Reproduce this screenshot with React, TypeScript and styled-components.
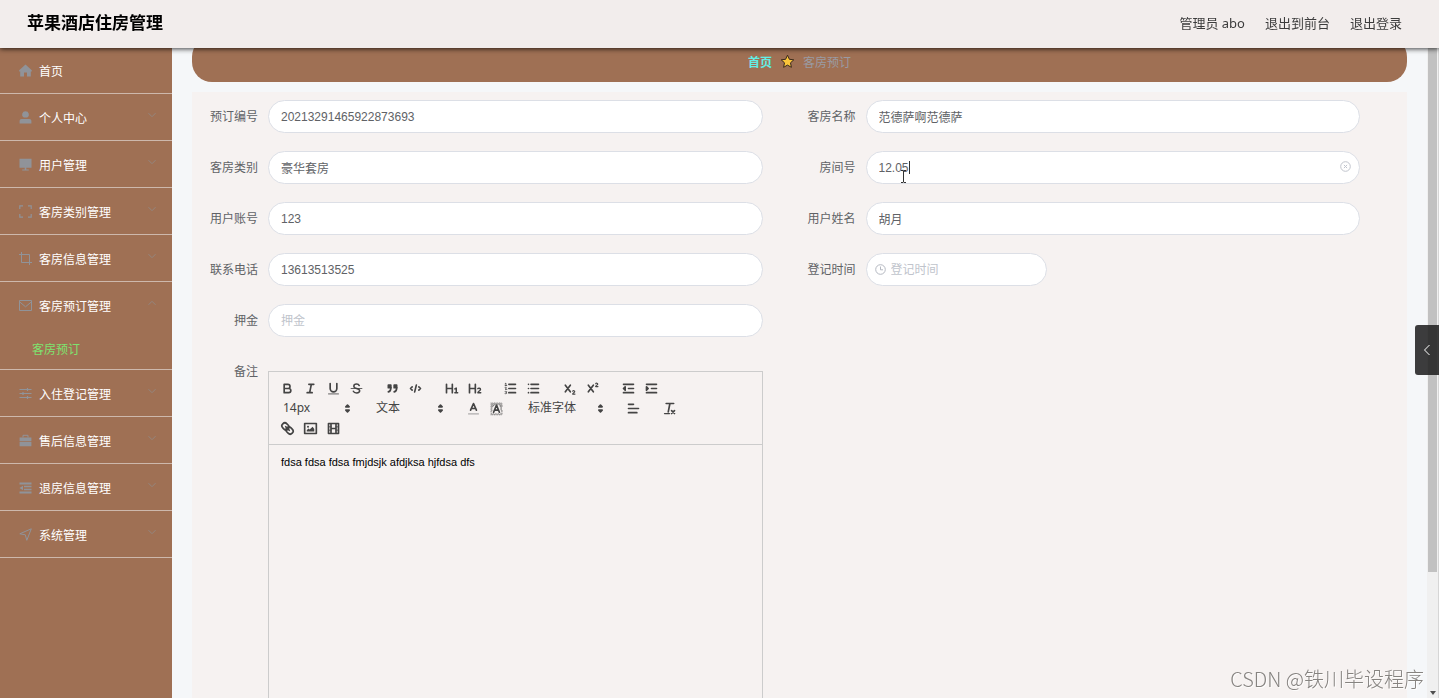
import React from 'react';
import styled, { createGlobalStyle } from 'styled-components';

const GlobalStyle = createGlobalStyle`
  * { box-sizing: border-box; }
  body {
    margin: 0;
    background: #f5f7f9;
    color: #606266;
    font-family: "Liberation Sans", "Noto Sans CJK SC", sans-serif;
    font-size: 12px;
  }
  button, input, select, textarea { font: inherit; color: inherit; }
`;

const uiFont = '"Noto Sans", "Noto Sans CJK SC", sans-serif';

/* ---------- page frame ---------- */

const Shell = styled.div`
  display: flex;
  height: 100vh;
  overflow: hidden;
`;

const Header = styled.header`
  position: fixed;
  inset: 0 0 auto 0;
  z-index: 5;
  display: flex;
  align-items: center;
  justify-content: space-between;
  height: 48px;
  padding: 0 37px 2px 27px;
  background: #f2edec;
  box-shadow: 0 1px 5px rgba(0, 0, 0, 0.75);
  font-family: ${uiFont};
`;

const Brand = styled.h1`
  margin: 0;
  color: #000;
  font-size: 17px;
  line-height: 24px;
  font-weight: 700;
`;

const Account = styled.nav`
  display: flex;
  gap: 20px;
  color: #3c3c3c;
  font-size: 13px;
  line-height: 20px;
`;

const AccountLink = styled.a`
  color: inherit;
  text-decoration: none;
`;

/* ---------- sidebar ---------- */

const Sidebar = styled.nav`
  flex: 0 0 172px;
  padding-top: 47px;
  background: #9f7054;
`;

const MenuList = styled.ul`
  margin: 0;
  padding: 0;
  list-style: none;
`;

const MenuItem = styled.li`
  border-bottom: 1px solid #cdb8ac;
`;

const MenuButton = styled.button`
  display: flex;
  align-items: center;
  gap: 7px;
  width: 100%;
  height: 46px;
  padding: 0 16px 0 19px;
  border: 0;
  background: none;
  color: #fff;
  text-align: left;
  cursor: pointer;
`;

const MenuText = styled.span`
  flex: 1;
`;

const MenuIcon = styled.svg`
  width: 13px;
  height: 13px;
  fill: none;
  stroke: #909399;
  stroke-width: 1;
`;

const Chevron = styled.svg<{ $up?: boolean }>`
  width: 8px;
  height: 8px;
  margin-bottom: 4px;
  fill: none;
  stroke: #94867f;
  stroke-width: 1;
  transform: ${(p) => (p.$up ? 'rotate(180deg)' : 'none')};
`;

const SubLink = styled.a`
  display: block;
  padding: 3px 0 0 32px;
  color: #7de36f;
  line-height: 38px;
  text-decoration: none;
`;

/* ---------- content ---------- */

const Content = styled.main`
  flex: 1;
  min-width: 0;
  padding: 37px 20px 0;
`;

const Breadcrumb = styled.nav`
  display: flex;
  align-items: center;
  justify-content: center;
  gap: 8px;
  height: 45px;
  padding-top: 4px;
  border-radius: 20px;
  background: #9f7054;
`;

const Crumb = styled.a<{ $home?: boolean }>`
  color: ${(p) => (p.$home ? '#62eee6' : '#9a9ba3')};
  font-weight: ${(p) => (p.$home ? 700 : 400)};
  text-decoration: none;
`;

const Panel = styled.form`
  display: grid;
  grid-template-columns: 1fr 1fr;
  row-gap: 18px;
  margin-top: 10px;
  padding: 8px 10px 40px;
  background: #f6f2f1;
`;

const Field = styled.div<{ $start?: boolean }>`
  display: flex;
  padding-right: 37px;
  ${(p) => (p.$start ? 'grid-column-start: 1;' : '')}
`;

const Label = styled.label`
  flex: 0 0 66px;
  padding: 2px 10px 0 0;
  line-height: 31px;
  text-align: right;
`;

const Control = styled.div<{ $short?: boolean }>`
  position: relative;
  flex: ${(p) => (p.$short ? '0 0 181px' : '1')};
`;

const TextInput = styled.input<{ $icon?: boolean }>`
  display: block;
  width: 100%;
  height: 33px;
  padding: 0 30px 0 ${(p) => (p.$icon ? '24px' : '12px')};
  border: 1px solid #dcdfe6;
  border-radius: 17px;
  outline: 0;
  background: #fff;
  &::placeholder { color: #c0c4cc; opacity: 1; }
`;

const ClockIcon = styled.svg`
  position: absolute;
  left: 9px;
  top: 11px;
  width: 11px;
  height: 11px;
  fill: none;
  stroke: #b4b8c1;
`;

const ClearButton = styled.button`
  position: absolute;
  right: 9px;
  top: 10px;
  display: flex;
  padding: 0;
  border: 0;
  background: none;
`;

const Caret = styled.span`
  position: absolute;
  left: 43px;
  top: 10px;
  width: 1px;
  height: 13px;
  background: #333;
`;

const Pointer = styled.svg`
  position: absolute;
  left: 34px;
  top: 19px;
  width: 7px;
  height: 13px;
  fill: none;
  stroke: #333;
`;

/* ---------- rich text editor ---------- */

const Editor = styled.div`
  flex: 1;
  margin-top: 16px;
  border: 1px solid #ccc;
`;

const Toolbar = styled.div`
  display: flex;
  flex-wrap: wrap;
  padding: 6px 7px;
  border-bottom: 1px solid #ccc;
  color: #444;
  font-family: ${uiFont};
`;

const ToolGroup = styled.div`
  display: flex;
  margin-right: 13px;
`;

const ToolButton = styled.button`
  width: 23px;
  height: 20px;
  padding: 2px 4px;
  border: 0;
  background: none;
  cursor: pointer;
`;

const ToolIcon = styled.svg`
  display: block;
  width: 15px;
  height: 15px;
  fill: none;
  stroke: #444;
  stroke-width: 2;
  stroke-linecap: round;
  stroke-linejoin: round;
  .fill { fill: #444; stroke: none; }
  .both { fill: #444; }
  .thin { stroke-width: 1; }
  .dots { stroke-width: 1; stroke-dasharray: 1 1; stroke-linecap: butt; }
`;

const Picker = styled.div<{ $wide?: boolean }>`
  position: relative;
  width: ${(p) => (p.$wide ? '88px' : '80px')};
  height: 20px;
`;

const PickerSelect = styled.select`
  appearance: none;
  display: block;
  width: 100%;
  height: 20px;
  padding: 0 20px 0 7px;
  border: 0;
  background: none;
  line-height: 20px;
`;

const PickerArrows = styled.svg`
  position: absolute;
  right: 1px;
  top: 3px;
  width: 15px;
  height: 15px;
  fill: #444;
  stroke: #444;
  stroke-width: 2;
  stroke-linejoin: round;
  pointer-events: none;
`;

const EditorText = styled.textarea`
  display: block;
  width: 100%;
  height: 400px;
  padding: 9px 12px;
  border: 0;
  outline: 0;
  resize: none;
  background: none;
  color: #000;
  font-size: 11px;
  line-height: 16px;
`;

/* ---------- window edge ---------- */

const ScrollTrack = styled.div`
  display: flex;
  flex: 0 0 12px;
  flex-direction: column;
  justify-content: space-between;
  align-items: center;
  padding: 48px 1px 3px;
  border-right: 1px solid #d6d6d6;
  background: #f0f0f0;
`;

const ScrollThumb = styled.div`
  width: 9px;
  height: 81%;
  background: #c1c1c1;
`;

const ScrollArrow = styled.svg`
  width: 6px;
  height: 4px;
  fill: #505050;
`;

const DrawerTab = styled.button`
  position: fixed;
  right: 0;
  top: 325px;
  z-index: 6;
  display: flex;
  align-items: center;
  justify-content: center;
  width: 24px;
  height: 50px;
  padding: 0;
  border: 0;
  border-radius: 3px 0 0 3px;
  background: rgba(32, 32, 32, 0.87);
`;

const Watermark = styled.div`
  position: fixed;
  right: 15px;
  bottom: 4px;
  z-index: 6;
  color: #868380;
  font-family: "Noto Sans CJK SC", sans-serif;
  font-size: 20px;
  font-weight: 300;
  line-height: 30px;
  text-shadow: 1px 1px 0 rgba(255, 255, 255, 0.8);
`;

/* ---------- menu data ---------- */

interface Entry {
  text: string;
  icon: React.ReactNode;
  leaf?: boolean;
  child?: string;
}

const menu: Entry[] = [
  {
    text: '首页',
    leaf: true,
    icon: <path fill="#909399" stroke="none" d="M6.5.5 12.800 6.200v1.300h-1v5H8V8.500H5v4H1.200v-5h-1V6.200z" />,
  },
  {
    text: '个人中心',
    icon: <path fill="#909399" stroke="none" d="M6.5.3a3.400 3.400 0 0 1 1.800 6.300H4.700A3.400 3.400 0 0 1 6.500.3zM.6 12.500V10c0-1.200.8-2 2-2h7.800c1.200 0 2 .8 2 2v2.500z" />,
  },
  {
    text: '用户管理',
    icon: <path fill="#909399" stroke="none" d="M.5.800h12v9H7.300v1.600h2.500v1H3.200v-1h2.500V9.800H.5z" />,
  },
  {
    text: '客房类别管理',
    icon: <path strokeWidth="1.200" d="M.8 4V.8H4M9 .8h3.200V4M12.200 9v3.200H9M4 12.200H.8V9" />,
  },
  {
    text: '客房信息管理',
    icon: <path d="M2.500 0v10.500H13M0 2.500h10.500V13" />,
  },
  {
    text: '客房预订管理',
    child: '客房预订',
    icon: <path d="M.5 1.500h12v10H.5zM.8 3l5.700 4.800L12.200 3" />,
  },
  {
    text: '入住登记管理',
    icon: <path strokeWidth="1.200" d="M.5 2.500h12M.5 6.500h12M.5 10.500h12M8.500 1v3M4 5v3M8.500 9v3" />,
  },
  {
    text: '售后信息管理',
    icon: (
      <>
        <path fill="#909399" stroke="none" d="M.6 3.500h11.800v3.700H.6zM.6 8h11.800v4.300H.6z" />
        <path d="M4 3.500V1.300h5v2.200" />
      </>
    ),
  },
  {
    text: '退房信息管理',
    icon: (
      <>
        <path strokeWidth="2" d="M.5 2.500h12M.5 11.500h12" />
        <path strokeWidth="1.500" d="M5 5.500h7.500M5 8.500h7.500" />
        <path fill="#909399" stroke="none" d="M.5 7 4 4.800v4.400z" />
      </>
    ),
  },
  {
    text: '系统管理',
    icon: <path d="M.8 5.800 12.300.8 7.800 12.300 6.300 6.800z" />,
  },
];

/* ---------- toolbar glyphs ---------- */

const glyph = {
  bold: (
    <path d="M5 4h4.500a2.500 2.500 0 0 1 0 5H5zM5 9h5.500a2.500 2.500 0 0 1 0 5H5z" />
  ),
  italic: <path d="M7 4h6M5 14h6M8 14l2-10" />,
  underline: (
    <>
      <path d="M5 3v6a4 4 0 0 0 8 0V3" />
      <path className="thin" d="M3 15.500h12" />
    </>
  ),
  strike: (
    <>
      <path className="thin" d="M2.500 9h13" />
      <path strokeWidth="1.800" d="M12.300 5.500C11.700 4.200 10.700 3.700 9.200 3.700 7.200 3.700 5.800 4.600 5.800 6.200 5.800 7.700 7 8.400 9.200 8.900c2.400.6 3.600 1.300 3.600 2.900S11.300 14.300 9.200 14.300c-2 0-3.400-.6-4-2" />
    </>
  ),
  quote: (
    <>
      <path className="both" d="M4 5h3v3H4zM11 5h3v3h-3z" />
      <path d="M7 8c0 3-.8 4.500-3 5M14 8c0 3-.8 4.500-3 5" />
    </>
  ),
  code: <path d="M5 7 3 9l2 2M13 7l2 2-2 2M10 5 8 13" />,
  h1: (
    <>
      <path d="M3 4v10M10 4v10M3 9h7" />
      <path strokeWidth="1.800" d="M13 9.500l1.700-1v5.500M13 14h3.400" />
    </>
  ),
  h2: (
    <>
      <path d="M3 4v10M10 4v10M3 9h7" />
      <path strokeWidth="1.700" d="M13 9.200c.6-.9 3.200-.8 3.200.9 0 1.600-3.200 2.200-3.200 3.900h3.500" />
    </>
  ),
  ordered: (
    <>
      <path d="M7 4h8M7 9h8M7 14h8" />
      <path className="thin" d="M2.500 3.200l1-.7v3M2.500 5.500h2M2.500 7.700c2-.8 2.200.6 0 2.300h2.200M2.500 12.500c2.500-.6 2.500 1 .8 1.200 2.200 0 1.800 2-.8 1.500" />
    </>
  ),
  bullet: <path d="M6 4h9M6 9h9M6 14h9M3 4h.01M3 9h.01M3 14h.01" />,
  sub: (
    <>
      <path d="M4 5l6 8M10 5l-6 8" />
      <path strokeWidth="1.300" d="M12.800 12.200c.5-1 2.700-.8 2.500.6-.1 1-2.500 1.500-2.600 2.900h2.900" />
    </>
  ),
  sup: (
    <>
      <path d="M4 5l6 8M10 5l-6 8" />
      <path strokeWidth="1.300" d="M12.800 3.200c.5-1 2.700-.8 2.500.6-.1 1-2.500 1.500-2.600 2.900h2.900" />
    </>
  ),
  outdent: <path className="both" d="M3 14h12M3 4h12M9 9h6M5 7v4L3 9z" />,
  indent: <path className="both" d="M3 14h12M3 4h12M9 9h6M3 7v4l2-2z" />,
  color: (
    <>
      <path d="M5.500 11 9 3l3.500 8M6.500 9h5" />
      <path className="thin" stroke="#888" d="M3 15.500h12" />
    </>
  ),
  background: (
    <>
      <path className="dots" d="M2 2.500h14M3 3.500h14M2 4.500h14M3 5.500h3M13 5.500h3M2 6.500h3M13 6.500h3M3 7.500h2M14 7.500h2M2 8.500h2M14 8.500h2M3 9.500h1M14 9.500h2M2 10.500h2M14 10.500h2M3 11.500h1M15 11.500h1M2 12.500h1M15 12.500h1M2 14.500h2M15 14.500h1M3 15.500h14M2 16.500h14" />
      <path d="M5.500 13.500 9 5l3.500 8.500M6.500 11h5" />
    </>
  ),
  align: <path d="M3 9h12M3 14h10M3 4h6" />,
  clean: (
    <>
      <path d="M5 3h9M9.500 3 7.500 13" />
      <path strokeWidth="1.500" d="M3 15h6" />
      <path d="M11.500 11.500l3.500 3.500M15 11.500 11.500 15" />
    </>
  ),
  link: (
    <g transform="rotate(45 9 9)">
      <rect x="1" y="5.500" width="9" height="7" rx="3.500" />
      <rect x="8" y="5.500" width="9" height="7" rx="3.500" />
      <path d="M6 9h6" />
    </g>
  ),
  image: (
    <>
      <path d="M2 3h14v12H2z" />
      <circle className="fill" cx="6" cy="7" r="1.200" />
      <path className="fill" d="M4.500 12.500V11L6.500 9 8 10.300 11.500 7l2 2.500v3z" />
    </>
  ),
  video: (
    <>
      <path d="M3 3h12v12H3zM6 3v12M12 3v12M6 9h6" />
      <path className="thin" d="M3 7h3M3 11h3M12 7h3M12 11h3" />
    </>
  ),
};

type GlyphName = keyof typeof glyph;

const Tools = ({ names }: { names: [GlyphName, string][] }) => (
  <ToolGroup>
    {names.map(([name, title]) => (
      <ToolButton key={name} type="button" aria-label={title}>
        <ToolIcon viewBox="0 0 18 18">{glyph[name]}</ToolIcon>
      </ToolButton>
    ))}
  </ToolGroup>
);

const PickerBox = ({ value, title, wide }: { value: string; title: string; wide?: boolean }) => (
  <Picker $wide={wide}>
    <PickerSelect aria-label={title}>
      <option>{value}</option>
    </PickerSelect>
    <PickerArrows viewBox="0 0 18 18">
      <path d="M7 7h4L9 5zM7 11h4l-2 2z" />
    </PickerArrows>
  </Picker>
);

interface RowProps {
  id: string;
  label: string;
  value?: string;
  placeholder?: string;
  start?: boolean;
  short?: boolean;
  children?: React.ReactNode;
}

const FormRow = ({ id, label, value, placeholder, start, short, children }: RowProps) => (
  <Field $start={start}>
    <Label htmlFor={id}>{label}</Label>
    <Control $short={short}>
      <TextInput id={id} $icon={short} defaultValue={value} placeholder={placeholder} />
      {children}
    </Control>
  </Field>
);

export default function App() {
  return (
    <>
      <GlobalStyle />
      <Header>
        <Brand>苹果酒店住房管理</Brand>
        <Account>
          <span>管理员 abo</span>
          <AccountLink href="#front">退出到前台</AccountLink>
          <AccountLink href="#logout">退出登录</AccountLink>
        </Account>
      </Header>
      <Shell>
        <Sidebar>
          <MenuList>
            {menu.map((m) => (
              <MenuItem key={m.text}>
                <MenuButton type="button">
                  <MenuIcon viewBox="0 0 13 13">{m.icon}</MenuIcon>
                  <MenuText>{m.text}</MenuText>
                  {!m.leaf && (
                    <Chevron viewBox="0 0 8 8" $up={!!m.child}>
                      <path d="M.5 2.200 4 5.700l3.500-3.500" />
                    </Chevron>
                  )}
                </MenuButton>
                {m.child && <SubLink href="#booking">{m.child}</SubLink>}
              </MenuItem>
            ))}
          </MenuList>
        </Sidebar>
        <Content>
          <Breadcrumb>
            <Crumb href="#home" $home>首页</Crumb>
            <svg width="15" height="15" viewBox="0 0 15 15">
              <path
                d="M7.500 1.200 9.400 5.300l4.400.5-3.300 3 .9 4.500-3.900-2.200-3.900 2.200.9-4.500-3.300-3 4.400-.5z"
                fill="#fbc53a"
                stroke="#3a2a1c"
                strokeLinejoin="round"
              />
            </svg>
            <Crumb href="#booking">客房预订</Crumb>
          </Breadcrumb>
          <Panel>
            <FormRow id="no" label="预订编号" value="20213291465922873693" />
            <FormRow id="name" label="客房名称" value="范德萨啊范德萨" />
            <FormRow id="type" label="客房类别" value="豪华套房" />
            <FormRow id="room" label="房间号" value="12.05">
              <Caret />
              <Pointer viewBox="0 0 7 13">
                <path d="M1 .5h2l.5.500.5-.5h2M3.500 1v11M1 12.500h2l.5-.5.5.5h2" />
              </Pointer>
              <ClearButton type="button" aria-label="清空">
                <svg width="11" height="11" viewBox="0 0 11 11" fill="none" stroke="#c0c4cc">
                  <circle cx="5.500" cy="5.500" r="4.800" />
                  <path d="M3.900 3.900l3.200 3.200M7.100 3.900 3.900 7.100" />
                </svg>
              </ClearButton>
            </FormRow>
            <FormRow id="account" label="用户账号" value="123" />
            <FormRow id="user" label="用户姓名" value="胡月" />
            <FormRow id="phone" label="联系电话" value="13613513525" />
            <FormRow id="time" label="登记时间" placeholder="登记时间" short>
              <ClockIcon viewBox="0 0 11 11">
                <circle cx="5.500" cy="5.500" r="4.800" />
                <path d="M5.500 2.500v3.300H8" />
              </ClockIcon>
            </FormRow>
            <FormRow id="deposit" label="押金" placeholder="押金" start />
            <Field $start>
              <Label htmlFor="remark">备注</Label>
              <Editor>
                <Toolbar>
                  <Tools names={[['bold', '加粗'], ['italic', '斜体'], ['underline', '下划线'], ['strike', '删除线']]} />
                  <Tools names={[['quote', '引用'], ['code', '代码']]} />
                  <Tools names={[['h1', '标题一'], ['h2', '标题二']]} />
                  <Tools names={[['ordered', '有序列表'], ['bullet', '无序列表']]} />
                  <Tools names={[['sub', '下标'], ['sup', '上标']]} />
                  <Tools names={[['outdent', '减少缩进'], ['indent', '增加缩进']]} />
                  <ToolGroup><PickerBox value="14px" title="字号" /></ToolGroup>
                  <ToolGroup><PickerBox value="文本" title="段落" /></ToolGroup>
                  <Tools names={[['color', '颜色'], ['background', '背景色']]} />
                  <ToolGroup><PickerBox value="标准字体" title="字体" wide /></ToolGroup>
                  <Tools names={[['align', '对齐']]} />
                  <Tools names={[['clean', '清除格式']]} />
                  <Tools names={[['link', '链接'], ['image', '图片'], ['video', '视频']]} />
                </Toolbar>
                <EditorText id="remark" spellCheck={false} defaultValue="fdsa fdsa fdsa fmjdsjk afdjksa hjfdsa dfs" />
              </Editor>
            </Field>
          </Panel>
        </Content>
        <ScrollTrack>
          <ScrollThumb />
          <ScrollArrow viewBox="0 0 6 4"><path d="M0 0h6L3 4z" /></ScrollArrow>
        </ScrollTrack>
      </Shell>
      <DrawerTab type="button" aria-label="展开">
        <svg width="8" height="12" viewBox="0 0 8 12" fill="none" stroke="#fff">
          <path d="M6.500 1 1.500 6l5 5" />
        </svg>
      </DrawerTab>
      <Watermark>CSDN @铁川毕设程序</Watermark>
    </>
  );
}
